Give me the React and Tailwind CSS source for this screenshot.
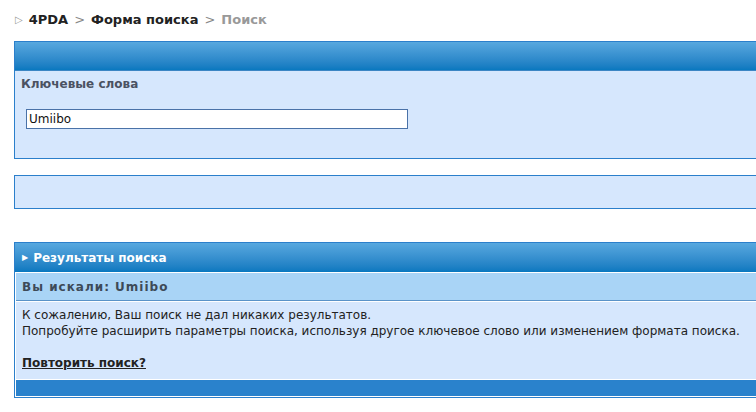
export default function App() {
  return (
    <div
      className="w-[756px] h-[412px] overflow-hidden bg-white text-[12px] text-[#222]"
      style={{ fontFamily: '"DejaVu Sans", Verdana, sans-serif' }}
    >
      {/* Breadcrumbs */}
      <div className="flex items-center h-[38px] pl-[15px] pt-px text-[13px] font-bold">
        <span className="text-[#9a9a9a] text-[10px] mr-[6px]">▷</span>
        <span className="text-[#222]">4PDA</span>
        <span className="text-[#888] font-normal mx-[6px]">&gt;</span>
        <span className="text-[#222]">Форма поиска</span>
        <span className="text-[#888] font-normal mx-[6px]">&gt;</span>
        <span className="text-[#999]">Поиск</span>
      </div>

      {/* Search form */}
      <div className="ml-[14px] mt-[3px] w-[780px] border border-[#2b7fcb] bg-[#d6e7fd]">
        <div className="h-[29px] bg-gradient-to-b from-[#57a8df] to-[#0878bf] border-b border-[#3c86c4]" />
        <div className="px-[6px] pt-[5px] pb-[29px]">
          <div className="font-bold text-[#4b5262] leading-[16px]">Ключевые слова</div>
          <div className="mt-[17px] pl-[5px]">
            <div className="w-[382px] h-[20px] bg-white border border-[#4a72a8] flex items-center px-[2px] text-[#111]">
              Umiibo
            </div>
          </div>
        </div>
      </div>

      <div className="ml-[14px] mt-[16px] w-[780px] h-[34px] border border-[#2b7fcb] bg-[#d6e7fd]" />

      {/* Results */}
      <div className="ml-[14px] mt-[33px] w-[780px] border border-[#2b7fcb] bg-white">
        <div className="h-[29px] bg-gradient-to-b from-[#57a8df] to-[#0878bf] flex items-center pl-[7px] text-white font-bold">
          <span className="text-[8px] mr-[5px]">▶</span>
          Результаты поиска
        </div>
        <div className="ml-px mt-px h-[28px] bg-[#a9d4f6] border-b border-[#5a93c8] flex items-center pl-[6px] font-bold tracking-[1px] text-[#3d4a58]">
          Вы искали: Umiibo
        </div>
        <div className="ml-px mt-px bg-[#d6e7fd] pl-[6px] pt-[5px] pb-[8px] leading-[16px] text-[#222]">
          <div>К сожалению, Ваш поиск не дал никаких результатов.</div>
          <div>Попробуйте расширить параметры поиска, используя другое ключевое слово или изменением формата поиска.</div>
          <div className="mt-[16px] font-bold underline">Повторить поиск?</div>
        </div>
        <div className="ml-px mt-px mb-px h-[16px] bg-[#2a82cc]" />
      </div>
    </div>
  );
}
